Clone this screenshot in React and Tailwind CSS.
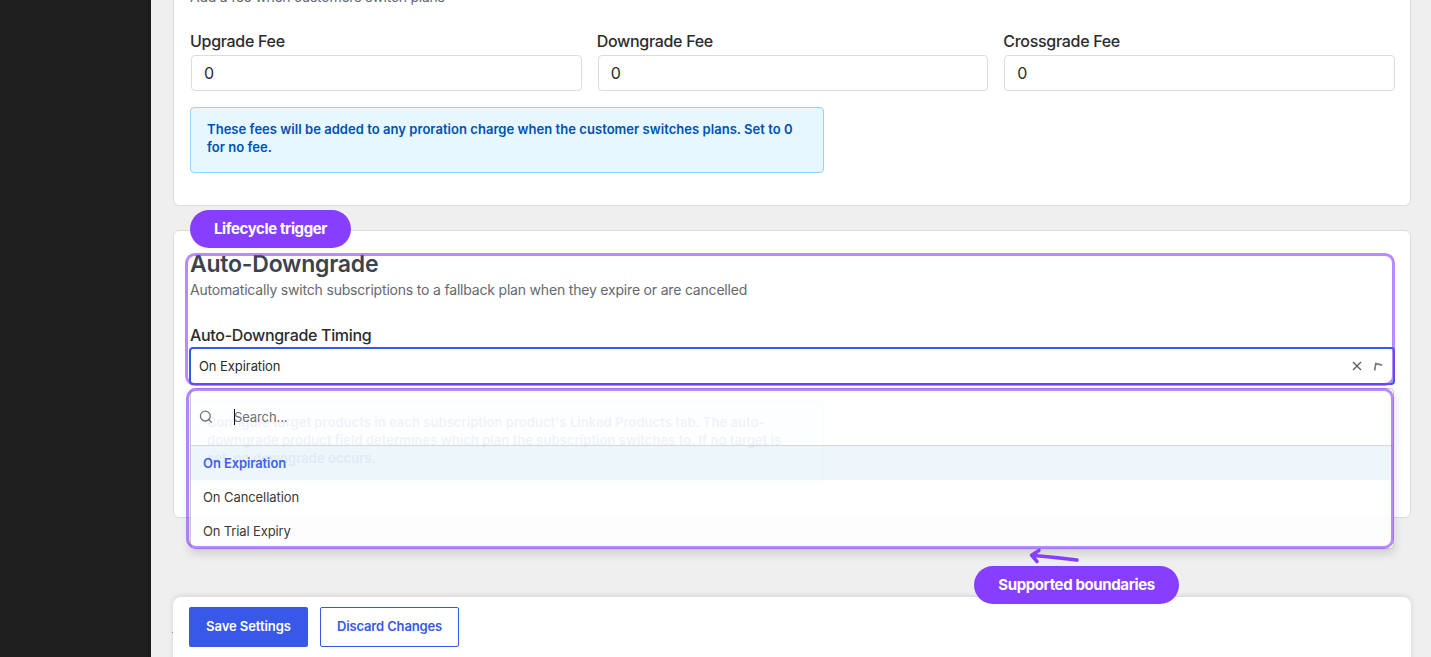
import React from 'react';

const fees = ['Upgrade Fee', 'Downgrade Fee', 'Crossgrade Fee'];

function FeeField({ label }) {
    return (
        <label className="block">
            <span className="block h-[23px] text-[16px] leading-[18px] font-medium tracking-[-0.3px] text-[#2c2c2c]">
                {label}
            </span>
            <span className="ml-px flex h-9 items-center rounded-[4px] border border-[#dcdcde] bg-white px-3 text-[16px] tracking-[-0.3px] text-[#2c2c2c]">
                0
            </span>
        </label>
    );
}

function Notice({ className, children }) {
    return (
        <div
            className={`w-[634px] rounded-[4px] border border-[#91d5ff] bg-[#e6f7ff] px-4 py-[12px] text-[13px] leading-[18px] font-semibold tracking-[0.045px] text-[#0050b3] ${className}`}
        >
            {children}
        </div>
    );
}

function Callout({ className, children }) {
    return (
        <div
            className={`absolute z-30 flex h-[38px] items-center justify-center rounded-full bg-[#873eff] text-[15px] font-bold tracking-[-0.38px] whitespace-nowrap text-white ${className}`}
        >
            {children}
        </div>
    );
}

function TimingSelect() {
    return (
        <div className="-ml-px flex h-[38px] w-[1206px] items-center rounded-[4px] border-2 border-[#3858e9] bg-white pl-2">
            <span className="flex-1 pt-0.5 text-[13px] tracking-[-0.07px] text-[#2c2c2c]">On Expiration</span>
            <svg className="mr-[11px]" width="10" height="10" viewBox="0 0 10 10" fill="none" stroke="#50575e" strokeWidth="1.2">
                <path d="M1 1l8 8M9 1L1 9" />
            </svg>
            <svg className="mr-[10px]" width="10" height="10" viewBox="0 0 10 10" fill="none" stroke="#787c82" strokeWidth="1.7">
                <path d="M1.6 9.5L2.8 2.6L9.2 4.1" />
            </svg>
        </div>
    );
}

function TimingMenu() {
    return (
        <div className="absolute top-[157px] left-4 z-10 h-[161px] w-[1204px] rounded-[4px] border border-[#c3c4c7] bg-white text-[13px] opacity-93 shadow-[0_4px_10px_rgba(0,0,0,0.16)]">
            <div className="flex h-[57px] items-center border-b border-[#d5d5d8] pl-[8px] text-[#646970]">
                <svg width="14" height="14" viewBox="0 0 14 14" fill="none" stroke="currentColor" strokeWidth="1.3">
                    <circle cx="6.3" cy="6.1" r="4.9" />
                    <path d="M9.800 9.600L12.800 12.600" />
                </svg>
                <span className="ml-[21px] h-4 w-px bg-black" />
                <span className="-ml-px pt-0.5 tracking-[-0.1px]">Search...</span>
            </div>
            <div className="flex h-[34px] items-center bg-[#eef6fb] pt-0.5 pl-3 font-semibold tracking-[-0.1px] text-[#3858e9]">
                On Expiration
            </div>
            <div className="flex h-[34px] items-center pt-0.5 pl-3 tracking-[-0.08px] text-[#2c2c2c]">
                On Cancellation
            </div>
            <div className="flex h-[34px] items-center pt-0.5 pl-3 tracking-[-0.14px] text-[#2c2c2c]">
                On Trial Expiry
            </div>
        </div>
    );
}

export default function App() {
    return (
        <div className="flex h-[657px] w-[1431px] overflow-hidden bg-[#efefef] font-['Inter','Liberation_Sans',sans-serif]">
            <aside className="w-[151px] shrink-0 bg-[#1e1e1e]" />
            <main className="flex w-[1280px] flex-col pr-5 pl-[22px]">
                <section className="h-[206px] shrink-0 rounded-b-[6px] border border-t-0 border-[#dcdcde] bg-white px-4">
                    <p className="-mt-[13px] h-[45px] text-[14px] leading-[20px] tracking-[-0.24px] text-[#646970]">
                        Add a fee when customers switch plans
                    </p>
                    <div className="grid w-[1205px] grid-cols-3 gap-[15px]">
                        {fees.map((fee) => (
                            <FeeField key={fee} label={fee} />
                        ))}
                    </div>
                    <Notice className="mt-4 h-[66px]">
                        These fees will be added to any proration charge when the customer switches plans. Set to 0
                        <br />
                        for no fee.
                    </Notice>
                </section>

                <section className="relative mt-6 h-[288px] shrink-0 rounded-[6px] border border-[#dcdcde] bg-white px-4 pt-[19px]">
                    <h2 className="text-[23px] leading-[28px] font-semibold tracking-[-0.23px] text-[#3c434a]">
                        Auto-Downgrade
                    </h2>
                    <p className="mt-[2px] text-[14px] leading-[20px] tracking-[-0.19px] text-[#646970]">
                        Automatically switch subscriptions to a fallback plan when they expire or are cancelled
                    </p>
                    <p className="mt-6 h-[23px] text-[16px] leading-[22px] font-medium tracking-[-0.32px] text-[#2c2c2c]">
                        Auto-Downgrade Timing
                    </p>
                    <TimingSelect />
                    <Notice className="mt-[15px] h-[84px]">
                        Configure target products in each subscription product's Linked Products tab. The auto-
                        <br />
                        downgrade product field determines which plan the subscription switches to. If no target is
                        <br />
                        set, no downgrade occurs.
                    </Notice>
                    <TimingMenu />

                    {/* tour highlights */}
                    <div className="absolute top-[22px] left-[11px] z-20 h-[133px] w-[1210px] rounded-[10px] border-[3px] border-[#873eff]/60" />
                    <div className="absolute top-[157px] left-[12px] z-20 h-[161px] w-[1208px] rounded-[10px] border-[3px] border-[#873eff]/60" />
                    <Callout className="top-[-21px] left-4 w-[161px]">Lifecycle trigger</Callout>
                    <Callout className="top-[335px] left-[800px] w-[205px]">Supported boundaries</Callout>
                    <svg
                        className="absolute top-[315px] left-[853px] z-30"
                        width="56"
                        height="20"
                        viewBox="0 0 56 20"
                        fill="none"
                        stroke="#873eff"
                        strokeWidth="3.5"
                        strokeLinecap="round"
                        strokeLinejoin="round"
                    >
                        <path d="M50 14C38 12.500 20 10.500 4.500 9.200M12 4.500L4.500 9.200L10 15.500" />
                    </svg>
                </section>

                <footer className="relative mt-[79px] flex h-[80px] shrink-0 items-start gap-3 rounded-t-[8px] bg-white px-4 pt-[10px] text-[13px] font-semibold shadow-[0_-1px_5px_rgba(0,0,0,0.12)]">
                    <span className="absolute top-[35px] -left-px size-px bg-[#8c8f94]" />
                    <button className="h-10 w-[119px] rounded-[2px] bg-[#3858e9] tracking-[-0.06px] text-white">
                        Save Settings
                    </button>
                    <button className="h-10 w-[139px] rounded-[2px] border border-[#3858e9] tracking-[-0.15px] text-[#3858e9]">
                        Discard Changes
                    </button>
                </footer>
            </main>
        </div>
    );
}
